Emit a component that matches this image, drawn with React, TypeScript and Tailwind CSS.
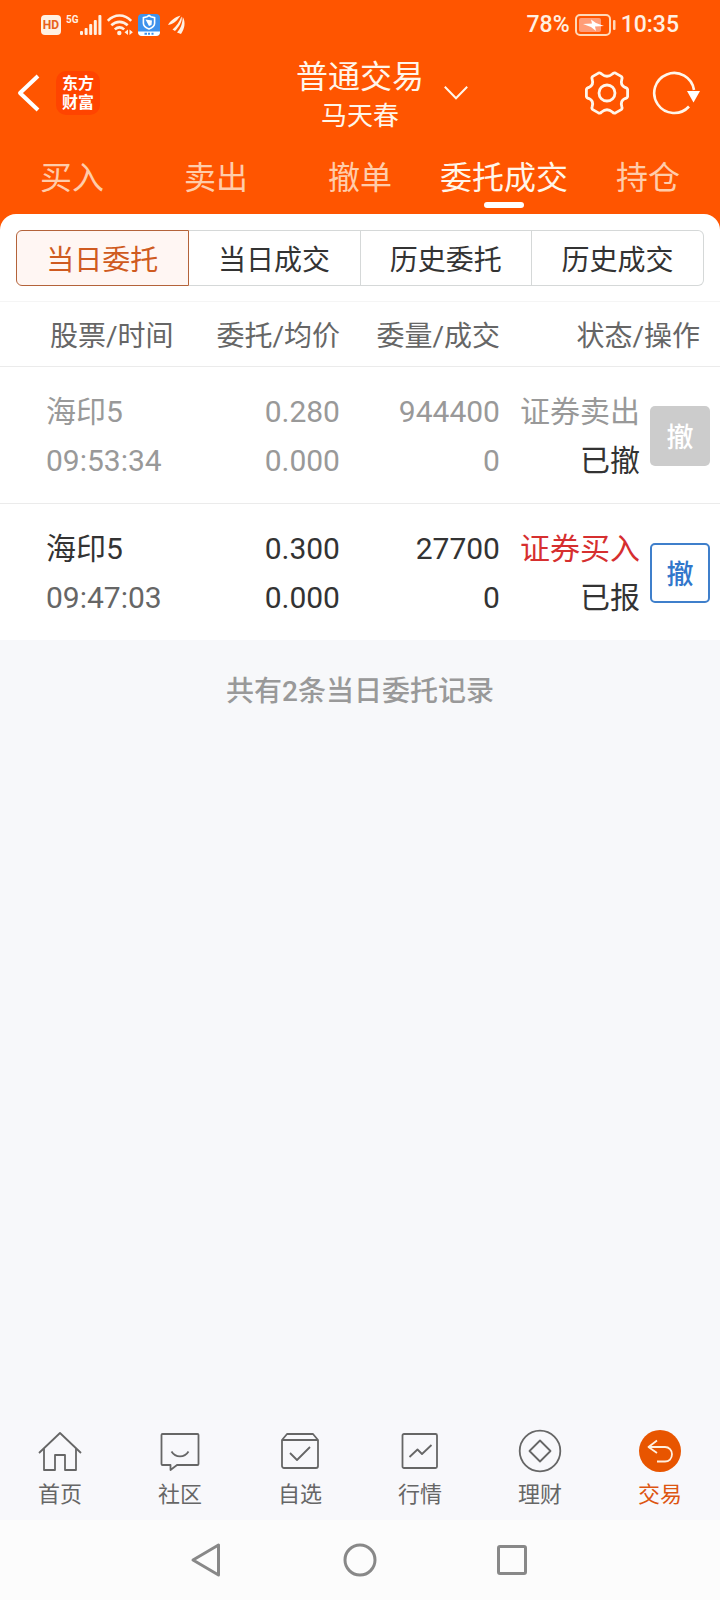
import { useState } from 'react';
import type { ReactNode } from 'react';
import clsx from 'clsx';

type Order = {
  name: string;
  time: string;
  price: string;
  avgPrice: string;
  volume: string;
  filled: string;
  side: string;
  isBuy: boolean;
  status: string;
  active: boolean;
};

const orders: Order[] = [
  {
    name: '海印5',
    time: '09:53:34',
    price: '0.280',
    avgPrice: '0.000',
    volume: '944400',
    filled: '0',
    side: '证券卖出',
    isBuy: false,
    status: '已撤',
    active: false,
  },
  {
    name: '海印5',
    time: '09:47:03',
    price: '0.300',
    avgPrice: '0.000',
    volume: '27700',
    filled: '0',
    side: '证券买入',
    isBuy: true,
    status: '已报',
    active: true,
  },
];

const tradeTabs = ['买入', '卖出', '撤单', '委托成交', '持仓'];
const segments = ['当日委托', '当日成交', '历史委托', '历史成交'];

function StatusBar() {
  return (
    <div className="flex h-12 items-center justify-between px-[41px] pt-[2px] text-[#fff0e2]">
      <div className="flex items-center gap-[5px]">
        <span className="flex h-5 w-5 items-center justify-center rounded-[4px] bg-[#fff0e2] text-[12px] font-bold text-[#e8611a]">
          HD
        </span>
        <div className="flex items-start gap-px">
          <span className="text-[10px] font-bold leading-[10px]">5G</span>
          <svg width="22" height="20" viewBox="0 0 22 20" fill="currentColor">
            <rect x="0" y="16" width="3" height="4" rx="1" />
            <rect x="4.6" y="13" width="3" height="7" rx="1" />
            <rect x="9.2" y="9" width="3" height="11" rx="1" />
            <rect x="13.8" y="5" width="3" height="15" rx="1" />
            <rect x="18.4" y="0" width="3" height="20" rx="1" />
          </svg>
        </div>
        <svg width="26" height="22" viewBox="0 0 26 22" fill="none" stroke="currentColor" strokeWidth="2.6">
          <path d="M.8 6.8C7.500-.2 17.500-.2 24.200 6.800" />
          <path d="M4.300 11.300c4.900-4.600 11.500-4.600 16.400 0" />
          <path d="M7.800 15.400c2.900-2.600 6.500-2.600 9.400 0" />
          <circle cx="12.300" cy="19" r="2.200" fill="currentColor" stroke="none" />
          <path d="M21 15.500v5.500l-3.500-2.700zM22.500 15.500v5.500l3.400-2.700z" fill="currentColor" stroke="none" />
        </svg>
        <svg width="22" height="22" viewBox="0 0 22 22" fill="none">
          <rect width="22" height="22" rx="4" fill="#3f92ec" />
          <path d="M0 17.500h22V18a4 4 0 0 1-4 4H4a4 4 0 0 1-4-4z" fill="#fff" />
          <path d="M6.500 19.800h2.500M10 19.800h2M13.500 19.800h2" stroke="#3f92ec" strokeWidth="2" />
          <path d="M11 1.500l2 1.200 3.600 1v5.600c0 2.800-2.500 4.500-5.600 5.700-3.100-1.200-5.600-2.900-5.600-5.700V3.700l3.600-1z" stroke="#fff" strokeWidth="1.600" />
          <path d="M7.500 5.500l6.500 1-.5 4.500L11 12z" fill="#fff" />
        </svg>
        <svg width="22" height="20" viewBox="0 0 22 20" fill="currentColor">
          <path d="M3 10C5.500 5.500 10 2 15.500.500 13 4.500 9 9.500 3 10z" />
          <path d="M7.500 14.500C11.500 11 14.500 7 16.500 1.500c1.500 4-2.500 10.500-6.500 14.500z" />
          <path d="M12 17.500c3.500-4 5.500-8.500 5.800-15.500 3.200 5.500 1.700 12-1.800 17z" />
        </svg>
      </div>
      <div className="flex items-center gap-[5px] text-[23px] font-medium">
        <span>78%</span>
        <svg width="41" height="22" viewBox="0 0 41 22" fill="none">
          <rect x="1" y="1" width="34" height="20" rx="4" stroke="#ffd9b8" strokeWidth="2" />
          <rect x="4" y="4" width="22" height="14" rx="2" fill="#ff9d78" />
          <path d="M8 10l9-.5-1-4 5 3.500 8 3-9 .500 1 4.500-5-4z" fill="#fff" />
          <rect x="38" y="6" width="2.500" height="10" rx="1" fill="#ffd9b8" />
        </svg>
        <span>10:35</span>
      </div>
    </div>
  );
}

function Header() {
  return (
    <div className="grid h-24 grid-cols-[1fr_auto_1fr] items-center text-[#fff6ea]">
      <div className="flex items-center gap-4 pl-[17px] pb-[6px]">
        <button aria-label="返回">
          <svg width="23" height="38" viewBox="0 0 23 38" fill="none" stroke="#fff" strokeWidth="4">
            <path d="M21 2L3 19l18 17" strokeLinejoin="round" />
          </svg>
        </button>
        <div className="flex h-11 w-11 flex-col items-center justify-center rounded-[10px] bg-[#ff4400] text-[16px] font-bold leading-[19px] text-white">
          <span>东方</span>
          <span>财富</span>
        </div>
      </div>
      <div className="flex flex-col items-center pb-[2px]">
        <h1 className="text-[32px] leading-[42px]">普通交易</h1>
        <span className="text-[26px] leading-[36px]">马天春</span>
      </div>
      <div className="flex items-center justify-between pl-5 pr-5 pb-[7px]">
        <button aria-label="切换账户">
          <svg width="24" height="14" viewBox="0 0 24 14" fill="none" stroke="currentColor" strokeWidth="2">
            <path d="M.8.800L12 12.200 23.200.800" />
          </svg>
        </button>
        <div className="flex items-center gap-[21px]">
          <button aria-label="设置">
            <svg width="48" height="48" viewBox="0 0 48 48" fill="none" stroke="currentColor" strokeWidth="2.800" strokeLinejoin="round">
              <path d="M44.600 20.500V27.500Q44.400 29 42 29.600Q37 32 38.800 37.500Q39.600 39.500 38.200 40.600L32.500 43.900Q30.800 44.700 29.400 43Q24 38.600 18.600 43Q17.200 44.700 15.500 43.900L9.800 40.600Q8.400 39.500 9.200 37.500Q11 32 6 29.600Q3.600 29 3.400 27.500V20.500Q3.600 19 6 18.400Q11 16 9.200 10.500Q8.400 8.500 9.800 7.400L15.500 4.100Q17.200 3.300 18.600 5Q24 9.400 29.400 5Q30.800 3.300 32.500 4.100L38.200 7.400Q39.600 8.500 38.800 10.500Q37 16 42 18.400Q44.400 19 44.600 20.500Z" />
              <circle cx="24" cy="24" r="8" />
            </svg>
          </button>
          <button aria-label="刷新">
            <svg width="48" height="44" viewBox="0 0 48 44" fill="none" stroke="currentColor" strokeWidth="2.600">
              <path d="M42 19A20 20 0 1 0 37 35.500" />
              <path d="M35 20h13l-6.500 11.500z" fill="#fff" stroke="none" />
            </svg>
          </button>
        </div>
      </div>
    </div>
  );
}

function CancelButton({ active }: { active: boolean }) {
  return (
    <button
      disabled={!active}
      className={clsx(
        'h-[60px] w-[60px] shrink-0 rounded-[5px] pt-1 text-[27px] font-medium',
        active ? 'border-2 border-[#3f7fcb] bg-white text-[#3277cb]' : 'bg-[#cccccc] text-white'
      )}
    >
      撤
    </button>
  );
}

function OrderTable() {
  return (
    <table className="w-full table-fixed border-separate border-spacing-0 bg-white">
      <colgroup>
        <col className="w-1/4" />
        <col className="w-2/9" />
        <col className="w-2/9" />
        <col />
      </colgroup>
      <thead>
        <tr className="h-[66px] text-[28px] text-[#666666]">
          <th className="border-y border-t-[#f5f5f5] border-b-[#ebebeb] p-0 pt-[6px] pl-[50px] text-left font-normal">股票/时间</th>
          <th className="border-y border-t-[#f5f5f5] border-b-[#ebebeb] p-0 pt-[6px] text-right font-normal">委托/均价</th>
          <th className="border-y border-t-[#f5f5f5] border-b-[#ebebeb] p-0 pt-[6px] text-right font-normal">委量/成交</th>
          <th className="border-y border-t-[#f5f5f5] border-b-[#ebebeb] p-0 pt-[6px] pr-5 text-right font-normal">状态/操作</th>
        </tr>
      </thead>
      <tbody className="text-[30px] leading-[49px]">
        {orders.map((order, index) => {
          const cell = clsx(
            'p-0 pt-5 pb-[18px]',
            index < orders.length - 1 && 'border-b border-[#ebebeb]'
          );
          const main = order.active ? 'text-[#333333]' : 'text-[#999999]';
          return (
            <tr key={order.time} className={main}>
              <td className={clsx(cell, 'pl-[46px]')}>
                <div>{order.name}</div>
                <div className={order.active ? 'text-[#666666]' : 'text-[#999999]'}>{order.time}</div>
              </td>
              <td className={clsx(cell, 'text-right')}>
                <div>{order.price}</div>
                <div>{order.avgPrice}</div>
              </td>
              <td className={clsx(cell, 'text-right')}>
                <div>{order.volume}</div>
                <div>{order.filled}</div>
              </td>
              <td className={cell}>
                <div className="flex items-center justify-end gap-[10px] pr-[10px] text-right">
                  <div>
                    <div className={order.isBuy ? 'text-[#d62f2f]' : undefined}>{order.side}</div>
                    <div className="text-[#333333]">{order.status}</div>
                  </div>
                  <CancelButton active={order.active} />
                </div>
              </td>
            </tr>
          );
        })}
      </tbody>
    </table>
  );
}

function NavIcon({ children }: { children: ReactNode }) {
  return (
    <svg width="48" height="48" viewBox="0 0 48 48" fill="none" stroke="currentColor" strokeWidth="1.800" strokeLinejoin="round">
      {children}
    </svg>
  );
}

const navItems = [
  {
    label: '首页',
    icon: (
      <NavIcon>
        <path d="M3 26L24 6l21 20" />
        <path d="M8 21.500V43h11V28h10v15h11V21.500" />
      </NavIcon>
    ),
  },
  {
    label: '社区',
    icon: (
      <NavIcon>
        <path d="M6.500 7h35a1 1 0 0 1 1 1v29a1 1 0 0 1-1 1H21l-6.500 5v-5h-8a1 1 0 0 1-1-1V8a1 1 0 0 1 1-1z" />
        <path d="M15.500 24.500c4 6.500 13 6.500 17 0" />
      </NavIcon>
    ),
  },
  {
    label: '自选',
    icon: (
      <NavIcon>
        <path d="M6 13l5-6h26l5 6v26a2 2 0 0 1-2 2H8a2 2 0 0 1-2-2zM6 13h36" />
        <path d="M14 26l7 7 13-13" />
      </NavIcon>
    ),
  },
  {
    label: '行情',
    icon: (
      <NavIcon>
        <rect x="6.500" y="7" width="34.500" height="34" rx="1.500" />
        <path d="M13.500 30l8-7.500 4.500 4.500 9.500-9" />
      </NavIcon>
    ),
  },
  {
    label: '理财',
    icon: (
      <NavIcon>
        <circle cx="24" cy="24" r="20.300" />
        <path d="M24 13.500L34.500 24 24 34.500 13.500 24z" />
      </NavIcon>
    ),
  },
  {
    label: '交易',
    icon: (
      <NavIcon>
        <circle cx="24" cy="24" r="21" fill="#e85500" stroke="none" />
        <path d="M21 13.500L12.500 20l8.500 6M12.500 20H29c4 0 7 3 7 7.300s-3 7.200-7 7.200h-8" stroke="#fff0e0" />
      </NavIcon>
    ),
  },
];

function BottomNav() {
  return (
    <nav className="grid grid-cols-6 bg-[#f8f8fb] pt-[7px] pb-[10px]">
      {navItems.map((item) => (
        <button
          key={item.label}
          className={clsx(
            'flex flex-col items-center gap-1 text-[22px] leading-[31px]',
            item.label === '交易' ? 'text-[#dd5511]' : 'text-[#666666]'
          )}
        >
          {item.icon}
          <span>{item.label}</span>
        </button>
      ))}
    </nav>
  );
}

function SystemNav() {
  return (
    <div className="flex h-20 items-center justify-center gap-[116px] bg-[#fcfcfc] text-[#888888]">
      <button aria-label="后退">
        <svg width="36" height="36" viewBox="0 0 36 36" fill="none" stroke="currentColor" strokeWidth="3" strokeLinejoin="round">
          <path d="M28.500 3v30L3 18z" />
        </svg>
      </button>
      <button aria-label="主屏幕">
        <svg width="36" height="36" viewBox="0 0 36 36" fill="none" stroke="currentColor" strokeWidth="3">
          <circle cx="18" cy="18" r="15" />
        </svg>
      </button>
      <button aria-label="最近任务">
        <svg width="36" height="36" viewBox="0 0 36 36" fill="none" stroke="currentColor" strokeWidth="3">
          <rect x="4.500" y="4.500" width="27" height="27" rx="1.500" />
        </svg>
      </button>
    </div>
  );
}

export default function App() {
  const [tab, setTab] = useState('委托成交');
  const [segment, setSegment] = useState('当日委托');

  return (
    <div className="flex min-h-screen flex-col bg-[#f7f8fa] font-[Roboto,'Noto_Sans_CJK_SC',sans-serif]">
      <header className="bg-[#ff5500]">
        <StatusBar />
        <Header />
        <div className="grid grid-cols-5">
          {tradeTabs.map((item) => (
            <button
              key={item}
              onClick={() => setTab(item)}
              className={clsx(
                'flex flex-col items-center pt-[10px] pb-[6px] text-[32px] leading-[48px]',
                tab === item ? 'text-[#fff6ea]' : 'text-[#ffccaa]'
              )}
            >
              {item}
              <span className={clsx('h-[6px] w-10 rounded-full', tab === item && 'bg-white')} />
            </button>
          ))}
        </div>
        <div className="rounded-t-[16px] bg-white px-4 pt-4 pb-[15px]">
          <div className="flex h-14">
            {segments.map((item) => (
              <button
                key={item}
                onClick={() => setSegment(item)}
                className={clsx(
                  'flex-1 border pt-[6px] text-[28px] first:rounded-l-[6px] last:rounded-r-[6px]',
                  segment === item
                    ? 'border-[#b4633a] bg-[#fff6f3] text-[#cf5a20]'
                    : 'border-[#d5d8d8] text-[#333333] not-first:border-l-0'
                )}
              >
                {item}
              </button>
            ))}
          </div>
        </div>
      </header>
      <main className="flex-1">
        <OrderTable />
        <p className="pt-8 text-center text-[28px] font-medium leading-10 text-[#999999]">共有2条当日委托记录</p>
      </main>
      <BottomNav />
      <SystemNav />
    </div>
  );
}
